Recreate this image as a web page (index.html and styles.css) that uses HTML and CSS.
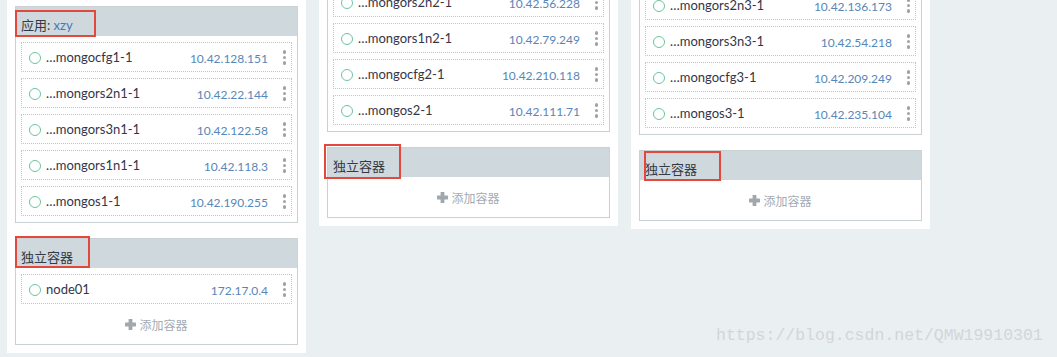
FILE: index.html
```html
<!DOCTYPE html>
<html lang="zh-CN">
<head>
<meta charset="utf-8">
<title>Hosts</title>
<link rel="stylesheet" href="styles.css">
</head>
<body>
<div class="hosts">
  <section class="host host-1">
    <div class="group">
      <div class="group-head">应用: <span class="stack">xzy</span></div>
      <span class="mark mark-a"></span>
      <div class="rows">
        <div class="row"><span class="state"></span><span class="name">…mongocfg1-1</span><span class="ip">10.42.128.151</span><span class="kebab"><i></i><i></i><i></i></span></div>
        <div class="row"><span class="state"></span><span class="name">…mongors2n1-1</span><span class="ip">10.42.22.144</span><span class="kebab"><i></i><i></i><i></i></span></div>
        <div class="row"><span class="state"></span><span class="name">…mongors3n1-1</span><span class="ip">10.42.122.58</span><span class="kebab"><i></i><i></i><i></i></span></div>
        <div class="row"><span class="state"></span><span class="name">…mongors1n1-1</span><span class="ip">10.42.118.3</span><span class="kebab"><i></i><i></i><i></i></span></div>
        <div class="row"><span class="state"></span><span class="name">…mongos1-1</span><span class="ip">10.42.190.255</span><span class="kebab"><i></i><i></i><i></i></span></div>
      </div>
    </div>
    <div class="group">
      <div class="group-head">独立容器</div>
      <span class="mark mark-b"></span>
      <div class="rows rows-tight">
        <div class="row"><span class="state"></span><span class="name">node01</span><span class="ip">172.17.0.4</span><span class="kebab"><i></i><i></i><i></i></span></div>
      </div>
      <div class="add"><svg class="plus" width="11" height="11" viewBox="0 0 11 11"><rect x="3.6" y="0" width="3.8" height="11" rx="0.6"/><rect x="0" y="3.6" width="11" height="3.8" rx="0.6"/></svg>添加容器</div>
    </div>
  </section>

  <section class="host host-2">
    <div class="group">
      <div class="group-head">应用: <span class="stack">xzy</span></div>
      <div class="rows">
        <div class="row"><span class="state"></span><span class="name">…mongors3n2-1</span><span class="ip">10.42.61.17</span><span class="kebab"><i></i><i></i><i></i></span></div>
        <div class="row"><span class="state"></span><span class="name">…mongors2n2-1</span><span class="ip">10.42.56.228</span><span class="kebab"><i></i><i></i><i></i></span></div>
        <div class="row"><span class="state"></span><span class="name">…mongors1n2-1</span><span class="ip">10.42.79.249</span><span class="kebab"><i></i><i></i><i></i></span></div>
        <div class="row"><span class="state"></span><span class="name">…mongocfg2-1</span><span class="ip">10.42.210.118</span><span class="kebab"><i></i><i></i><i></i></span></div>
        <div class="row"><span class="state"></span><span class="name">…mongos2-1</span><span class="ip">10.42.111.71</span><span class="kebab"><i></i><i></i><i></i></span></div>
      </div>
    </div>
    <div class="group">
      <div class="group-head">独立容器</div>
      <span class="mark mark-c"></span>
      <div class="add"><svg class="plus" width="11" height="11" viewBox="0 0 11 11"><rect x="3.6" y="0" width="3.8" height="11" rx="0.6"/><rect x="0" y="3.6" width="11" height="3.8" rx="0.6"/></svg>添加容器</div>
    </div>
  </section>

  <section class="host host-3">
    <div class="group">
      <div class="group-head">应用: <span class="stack">xzy</span></div>
      <div class="rows">
        <div class="row"><span class="state"></span><span class="name">…mongors1n3-1</span><span class="ip">10.42.88.12</span><span class="kebab"><i></i><i></i><i></i></span></div>
        <div class="row"><span class="state"></span><span class="name">…mongors2n3-1</span><span class="ip">10.42.136.173</span><span class="kebab"><i></i><i></i><i></i></span></div>
        <div class="row"><span class="state"></span><span class="name">…mongors3n3-1</span><span class="ip">10.42.54.218</span><span class="kebab"><i></i><i></i><i></i></span></div>
        <div class="row"><span class="state"></span><span class="name">…mongocfg3-1</span><span class="ip">10.42.209.249</span><span class="kebab"><i></i><i></i><i></i></span></div>
        <div class="row"><span class="state"></span><span class="name">…mongos3-1</span><span class="ip">10.42.235.104</span><span class="kebab"><i></i><i></i><i></i></span></div>
      </div>
    </div>
    <div class="group">
      <div class="group-head">独立容器</div>
      <span class="mark mark-d"></span>
      <div class="add"><svg class="plus" width="11" height="11" viewBox="0 0 11 11"><rect x="3.6" y="0" width="3.8" height="11" rx="0.6"/><rect x="0" y="3.6" width="11" height="3.8" rx="0.6"/></svg>添加容器</div>
    </div>
  </section>
</div>
<div class="watermark">https://blog.csdn.net/QMW19910301</div>
</body>
</html>
```

FILE: styles.css
```css
html, body {
  margin: 0;
  padding: 0;
  height: 100%;
  overflow: hidden;
}
body {
  background: #eaeff2;
  font-family: Lato, "Noto Sans CJK SC", sans-serif;
  color: #333;
  position: relative;
}
.hosts {
  display: flex;
  align-items: flex-start;
  gap: 13px;
  padding-left: 7px;
}
.host {
  width: 299px;
  box-sizing: border-box;
  background: #fff;
  padding: 8px;
  flex: none;
}
.host-1 { margin-top: -2px; }
.host-2 { margin-top: -93px; }
.host-3 { margin-top: -90px; }

.group {
  position: relative;
  border: 1px solid #c9d1d5;
  background: #fff;
}
.group + .group { margin-top: 15px; }

.group-head {
  background: #cfd8dc;
  padding: 7px 6px 0 5px;
  height: 22px;
  line-height: 22px;
  font-size: 13px;
  color: #333a44;
}
.stack { color: #3a7bbf; }

.rows {
  padding: 6px 5px 0;
}
.row {
  display: flex;
  align-items: center;
  height: 30px;
  box-sizing: border-box;
  border: 1px dotted #c4c4c4;
  margin-bottom: 6px;
  padding-left: 7px;
}
.rows-tight .row:last-child { margin-bottom: 0; }
.state {
  width: 12px;
  height: 12px;
  box-sizing: border-box;
  border: 1.5px solid #6cc49f;
  border-radius: 50%;
  flex: none;
  margin-top: 2px;
}
.name {
  margin-left: 5px;
  font-size: 13px;
  color: #353549;
  flex: 1;
  white-space: nowrap;
}
.ip {
  font-size: 12px;
  color: #5786b8;
  margin-top: 3px;
}
.kebab {
  width: 13px;
  margin-left: 10px;
  display: flex;
  flex-direction: column;
  align-items: center;
  gap: 2px;
  margin-top: 1px;
}
.kebab i {
  width: 3.5px;
  height: 3.5px;
  border-radius: 50%;
  background: #9ea3a8;
}

.add {
  height: 40px;
  display: flex;
  align-items: center;
  justify-content: center;
  font-size: 12px;
  color: #a3abb2;
  gap: 3px;
}
.plus { fill: #a0a8ae; margin-top: 1px; }

.mark {
  position: absolute;
  border: 2px solid #e2483c;
  box-sizing: border-box;
  pointer-events: none;
}
.mark-a { top: 3px; left: -1px; width: 81px; height: 27px; }
.mark-b { top: -3px; left: -1px; width: 75px; height: 32px; }
.mark-c { top: -4px; left: -4px; width: 77px; height: 35px; }
.mark-d { top: 0px; left: 4px; width: 77px; height: 30px; }

.watermark {
  position: absolute;
  left: 716px;
  top: 326px;
  font-family: "Liberation Mono", monospace;
  font-size: 16.5px;
  line-height: 20px;
  color: #d2d6d9;
  white-space: nowrap;
}
```
